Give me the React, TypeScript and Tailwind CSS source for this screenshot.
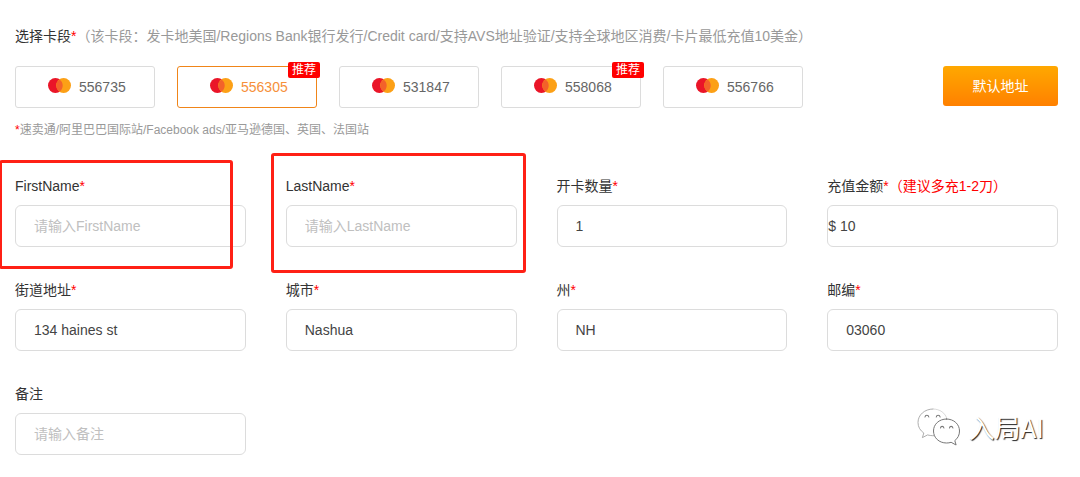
import React, { useState } from 'react';
import clsx from 'clsx';

interface CardSegment {
  number: string;
  recommended?: boolean;
}

interface Field {
  id: string;
  label: string;
  value?: string;
  placeholder?: string;
  required?: boolean;
  hint?: string;
  flush?: boolean;
  highlight?: string;
}

const segments: CardSegment[] = [
  { number: '556735' },
  { number: '556305', recommended: true },
  { number: '531847' },
  { number: '558068', recommended: true },
  { number: '556766' },
];

const fields: Field[] = [
  {
    id: 'firstName',
    label: 'FirstName',
    placeholder: '请输入FirstName',
    required: true,
    highlight: '-left-4 -top-4 right-[13px] -bottom-[22px]',
  },
  {
    id: 'lastName',
    label: 'LastName',
    placeholder: '请输入LastName',
    required: true,
    highlight: '-left-[15px] -top-[23px] -right-[9px] -bottom-[26px]',
  },
  { id: 'count', label: '开卡数量', value: '1', required: true },
  { id: 'amount', label: '充值金额', value: '$ 10', required: true, hint: '（建议多充1-2刀）', flush: true },
  { id: 'street', label: '街道地址', value: '134 haines st', required: true },
  { id: 'city', label: '城市', value: 'Nashua', required: true },
  { id: 'state', label: '州', value: 'NH', required: true },
  { id: 'zip', label: '邮编', value: '03060', required: true },
  { id: 'remark', label: '备注', placeholder: '请输入备注' },
];

function MastercardIcon() {
  return (
    <svg width="23" height="18" viewBox="0 0 23 18" aria-hidden="true">
      <circle cx="7.4" cy="7.5" r="7.4" fill="#ea1528" />
      <circle cx="15.6" cy="7.5" r="7.4" fill="#fca016" />
      <path d="M11.5 1.4a7.4 7.4 0 0 1 0 12.2a7.4 7.4 0 0 1 0-12.2z" fill="#f3622a" />
    </svg>
  );
}

function SegmentButton({
  segment,
  active,
  onSelect,
}: {
  segment: CardSegment;
  active: boolean;
  onSelect: () => void;
}) {
  return (
    <button
      type="button"
      aria-pressed={active}
      onClick={onSelect}
      className={clsx(
        'relative flex h-[42px] w-[140px] items-center gap-2 rounded-[3px] border bg-white pl-8 text-sm',
        active ? 'border-[#f08519] text-[#f6903a]' : 'border-[#dcdcdc] text-[#666]'
      )}
    >
      <MastercardIcon />
      {segment.number}
      {segment.recommended && (
        <span className="absolute -right-1 -top-[5px] rounded-xs bg-[#ff0000] px-1 text-xs leading-4 text-white">
          推荐
        </span>
      )}
    </button>
  );
}

function FormField({ field }: { field: Field }) {
  return (
    <div className="relative">
      <label htmlFor={field.id} className="mb-[9px] block text-sm leading-5 text-[#333]">
        {field.label}
        {field.required && <span className="text-[#ff0000]">*</span>}
        {field.hint && <span className="text-[#ff0000]">{field.hint}</span>}
      </label>
      <input
        id={field.id}
        type="text"
        defaultValue={field.value}
        placeholder={field.placeholder}
        className={clsx(
          'block h-[42px] w-full rounded-md border border-[#dcdcdc] bg-white text-sm text-[#444] outline-none placeholder:text-[#c0c0c0]',
          field.flush ? 'px-0' : 'px-[18px]'
        )}
      />
      {field.highlight && (
        <div
          className={clsx('pointer-events-none absolute rounded-[3px] border-3 border-[#ff2015]', field.highlight)}
        />
      )}
    </div>
  );
}

function Watermark() {
  return (
    <div className="pointer-events-none absolute right-9 bottom-[30px] flex items-center gap-2">
      <svg
        width="44"
        height="40"
        viewBox="0 0 44 40"
        fill="#fff"
        strokeLinecap="round"
        strokeLinejoin="round"
        aria-hidden="true"
      >
        <path
          d="M16 2C7.500 2 1 8 1 15.500c0 4.500 2.200 8 5.800 10.500l-1.400 4.600 5.200-2.700c2 .6 4 .8 6.400.8"
          stroke="#999"
          strokeWidth="0.800"
        />
        <path d="M16 2c7 0 12.500 4 14 10" stroke="#c8c8c8" strokeWidth="0.700" />
        <path
          d="M29.500 12c-7.500 0-13 5.300-13 12s5.500 12 13 12c1.700 0 3.200-.2 4.600-.7l5 2.700-1.300-4.400c3-2.300 4.700-5.600 4.700-9.600 0-6.700-5.500-12-13-12z"
          stroke="#777"
          strokeWidth="1"
        />
        <g fill="none" stroke="#777" strokeWidth="1.100">
          <path d="M8 10c.3-2.400 3.400-2.400 3.800 0" />
          <path d="M19.300 10c.3-2.400 3.400-2.400 3.800 0" />
          <path d="M23.500 21c.3-2.200 3-2.200 3.400 0" />
          <path d="M32.500 21c.3-2.200 3-2.200 3.400 0" />
        </g>
      </svg>
      <span className="font-['Noto_Sans_CJK_SC',sans-serif] text-[26px] leading-10 text-white [text-shadow:1px_1px_1px_#222]">
        入局AI
      </span>
    </div>
  );
}

function App() {
  const [selected, setSelected] = useState('556305');

  return (
    <main className="relative bg-white pt-[26px] pr-[22px] pb-[22px] pl-[15px] font-['Liberation_Sans','Noto_Sans_CJK_SC',sans-serif]">
      <form>
        <p className="text-sm leading-5 text-[#999]">
          <span className="text-[#333]">选择卡段</span>
          <span className="text-[#ff0000]">*</span>
          （该卡段：发卡地美国/Regions Bank银行发行/Credit card/支持AVS地址验证/支持全球地区消费/卡片最低充值10美金）
        </p>

        <div className="mt-5 flex items-start justify-between">
          <div className="flex flex-wrap gap-[22px]">
            {segments.map((segment) => (
              <SegmentButton
                key={segment.number}
                segment={segment}
                active={segment.number === selected}
                onSelect={() => setSelected(segment.number)}
              />
            ))}
          </div>
          <button
            type="button"
            className="h-10 w-[115px] shrink-0 rounded-[3px] bg-linear-to-b from-[#ffa800] to-[#ff8000] text-sm text-white"
          >
            默认地址
          </button>
        </div>

        <p className="mt-[14px] text-xs leading-4 text-[#999]">
          <span className="text-[#ff0000]">*</span>
          速卖通/阿里巴巴国际站/Facebook ads/亚马逊德国、英国、法国站
        </p>

        <div className="mt-[38px] grid grid-cols-4 gap-x-10 gap-y-[33px]">
          {fields.map((field) => (
            <FormField key={field.id} field={field} />
          ))}
        </div>
      </form>

      <Watermark />
    </main>
  );
}

export default App;
